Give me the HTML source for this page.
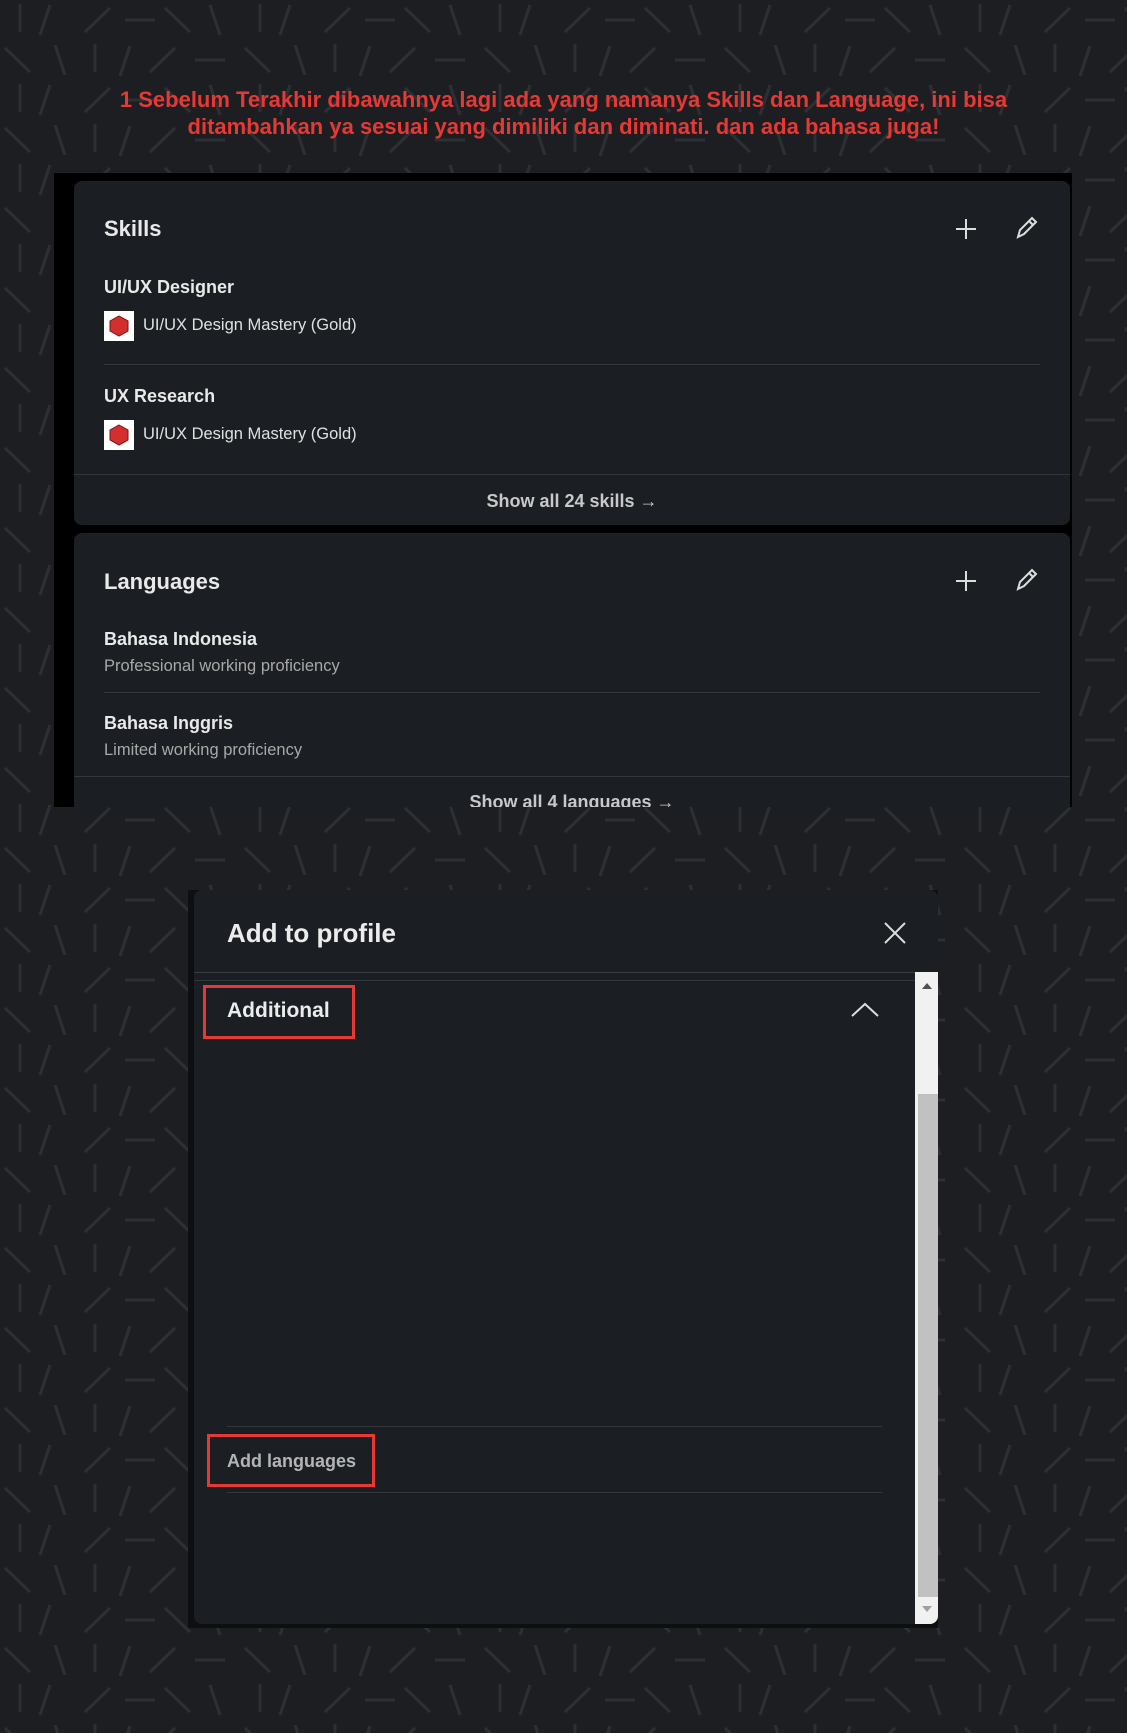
<!DOCTYPE html>
<html><head><meta charset="utf-8"><style>
*{margin:0;padding:0;box-sizing:border-box}
body{width:1127px;height:1733px;position:relative;overflow:hidden;background:#1c1e22;font-family:"Liberation Sans",sans-serif;color:#e8e8e8}
.abs{position:absolute}
.t{white-space:nowrap}
.card{position:absolute;background:#1b1f23;border-radius:8px}
.h{font-size:22px;font-weight:bold;color:#e9e9e9}
.n{font-size:18px;font-weight:bold;color:#e9e9e9}
.s{font-size:16.5px;color:#e0e0e0}
.g{font-size:16.5px;color:#a8a8a8}
.div{position:absolute;height:1px;background:#33373c}
.badge{position:absolute;width:30px;height:30px;background:#fff}
</style></head><body>
<svg class="abs" style="left:0;top:0" width="1127" height="1733">
<defs><pattern id="p" width="240" height="80" patternUnits="userSpaceOnUse">
<g stroke="#2c2f34" stroke-width="3" fill="none">
<line x1="20" y1="4" x2="20" y2="32"/><line x1="50" y1="5" x2="40" y2="35"/><line x1="85" y1="32" x2="110" y2="8"/><line x1="125" y1="20" x2="155" y2="20"/><line x1="165" y1="8" x2="190" y2="32"/><line x1="210" y1="5" x2="220" y2="35"/>
<line x1="5" y1="48" x2="30" y2="72"/><line x1="55" y1="45" x2="65" y2="75"/><line x1="95" y1="44" x2="95" y2="72"/><line x1="130" y1="46" x2="120" y2="76"/><line x1="150" y1="72" x2="175" y2="48"/><line x1="195" y1="60" x2="225" y2="60"/>
</g></pattern></defs>
<rect width="1127" height="1733" fill="url(#p)"/>
</svg>
<div class="abs t" style="left:0;width:1127px;top:86px;text-align:center;color:#e53935;font-size:22px;font-weight:bold;line-height:27px">1 Sebelum Terakhir dibawahnya lagi ada yang namanya Skills dan Language, ini bisa<br>ditambahkan ya sesuai yang dimiliki dan diminati. dan ada bahasa juga!</div>

<div class="abs" style="left:54px;top:173px;width:1018px;height:634px;background:#000;overflow:hidden">
 <div class="card" style="left:20px;top:8px;width:996px;height:344px">
  <div class="abs t h" style="left:30px;top:35px">Skills</div>
  <svg class="abs" style="left:880px;top:36px" width="24" height="24"><path d="M12 2v20M2 12h20" stroke="#ddd" stroke-width="2"/></svg>
  <svg class="abs" style="left:940px;top:34px" width="26" height="26"><path d="M4 22l2-7L18 3l4 4L10 19z M15 6l4 4" stroke="#ddd" stroke-width="2" fill="none"/></svg>
  <div class="abs t n" style="left:30px;top:96px">UI/UX Designer</div>
  <div class="badge" style="left:30px;top:130px"><svg width="30" height="30"><path d="M15 5l9 5v10l-9 5-9-5V10z" fill="#d32f2f" stroke="#7a1010"/></svg></div>
  <div class="abs t s" style="left:69px;top:135px">UI/UX Design Mastery (Gold)</div>
  <div class="div" style="left:30px;top:183px;width:936px"></div>
  <div class="abs t n" style="left:30px;top:205px">UX Research</div>
  <div class="badge" style="left:30px;top:239px"><svg width="30" height="30"><path d="M15 5l9 5v10l-9 5-9-5V10z" fill="#d32f2f" stroke="#7a1010"/></svg></div>
  <div class="abs t s" style="left:69px;top:244px">UI/UX Design Mastery (Gold)</div>
  <div class="div" style="left:0;top:293px;width:996px"></div>
  <div class="abs t" style="left:0;width:996px;text-align:center;top:310px;font-size:18px;font-weight:bold;color:#c8c8c8">Show all 24 skills →</div>
 </div>
 <div class="card" style="left:20px;top:360px;width:996px;height:300px">
  <div class="abs t h" style="left:30px;top:36px">Languages</div>
  <svg class="abs" style="left:880px;top:36px" width="24" height="24"><path d="M12 2v20M2 12h20" stroke="#ddd" stroke-width="2"/></svg>
  <svg class="abs" style="left:940px;top:34px" width="26" height="26"><path d="M4 22l2-7L18 3l4 4L10 19z M15 6l4 4" stroke="#ddd" stroke-width="2" fill="none"/></svg>
  <div class="abs t n" style="left:30px;top:96px">Bahasa Indonesia</div>
  <div class="abs t g" style="left:30px;top:124px">Professional working proficiency</div>
  <div class="div" style="left:30px;top:159px;width:936px"></div>
  <div class="abs t n" style="left:30px;top:180px">Bahasa Inggris</div>
  <div class="abs t g" style="left:30px;top:208px">Limited working proficiency</div>
  <div class="div" style="left:0;top:243px;width:996px"></div>
  <div class="abs t" style="left:0;width:996px;text-align:center;top:259px;font-size:18px;font-weight:bold;color:#c8c8c8">Show all 4 languages →</div>
 </div>
</div>

<div class="abs" style="left:188px;top:890px;width:750px;height:738px;background:#0e0f11"></div>
<div class="abs" style="left:194px;top:890px;width:744px;height:734px;background:#1b1f23;border-radius:8px;overflow:hidden">
 <div class="abs t" style="left:33px;top:28px;font-size:26px;font-weight:bold;color:#ececec">Add to profile</div>
 <svg class="abs" style="left:689px;top:31px" width="24" height="24"><path d="M2 2l20 20M22 2L2 22" stroke="#ddd" stroke-width="2"/></svg>
 <div class="div" style="left:0;top:82px;width:744px;background:#3a3e43"></div>
 <div class="div" style="left:0;top:90px;width:721px"></div>
 <div class="abs" style="left:721px;top:82px;width:23px;height:652px;background:#f1f1f1"></div>
 <div class="abs" style="left:724px;top:204px;width:20px;height:503px;background:#c1c1c1"></div>
 <svg class="abs" style="left:726px;top:91px" width="14" height="10"><path d="M7 2l5 6H2z" fill="#505050"/></svg>
 <svg class="abs" style="left:726px;top:714px" width="14" height="10"><path d="M2 2h10L7 8z" fill="#a0a0a0"/></svg>
 <div class="abs" style="left:9px;top:95px;width:152px;height:54px;border:3px solid #e53935"></div>
 <div class="abs t" style="left:33px;top:109px;font-size:21px;font-weight:bold;color:#ececec">Additional</div>
 <svg class="abs" style="left:656px;top:112px" width="30" height="16"><path d="M2 14L15 2l13 12" stroke="#ddd" stroke-width="2" fill="none"/></svg>
 <div class="div" style="left:33px;top:536px;width:655px"></div>
 <div class="abs" style="left:13px;top:544px;width:168px;height:53px;border:3px solid #e53935"></div>
 <div class="abs t" style="left:33px;top:561px;font-size:18px;font-weight:bold;color:#b4b4b4">Add languages</div>
 <div class="div" style="left:33px;top:602px;width:655px"></div>
</div>
</body></html>
